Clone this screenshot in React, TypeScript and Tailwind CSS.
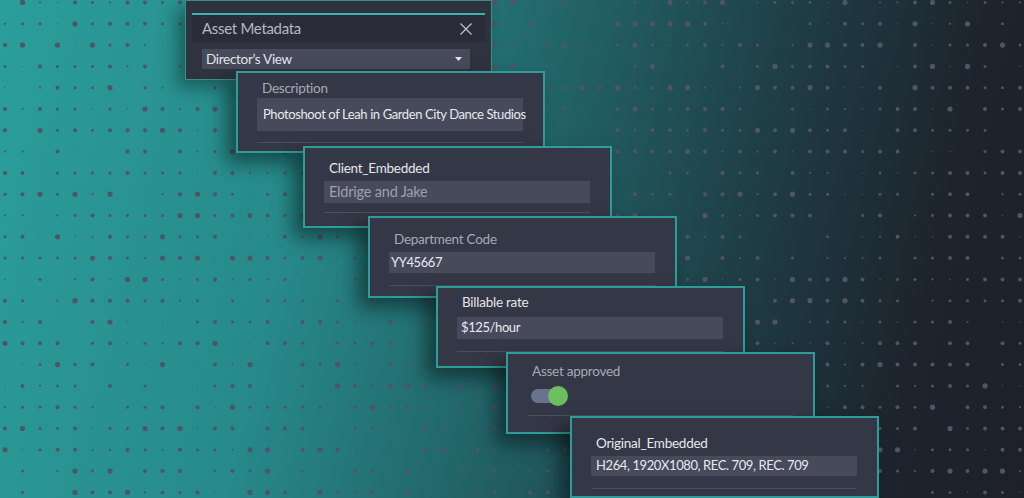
// deterministic dot field for the halftone background
function makeDots() {
  const dots: { x: number; y: number; r: number }[] = [];
  let seed = 7;
  const rand = () => {
    seed = (seed * 16807) % 2147483647;
    return seed / 2147483647;
  };
  const sizes = [0, 0.7, 1.1, 1.5, 1.5, 2, 2, 2.6];
  for (let row = 0; row < 24; row++) {
    for (let col = 0; col < 60; col++) {
      const r = sizes[Math.floor(rand() * sizes.length)];
      if (r === 0) continue;
      dots.push({ x: 5 + col * 17.5, y: 2.5 + row * 21.3, r });
    }
  }
  return dots;
}

const dots = makeDots();

type Card = {
  pos: string;
  pad: string;
  label: string;
  labelClass: string;
  value?: string;
  valueClass?: string;
  inputClass?: string;
  gap: string;
  divGap: string;
  toggle?: boolean;
};

const cards: Card[] = [
  {
    pos: "left-[236px] top-[71px]",
    pad: "pt-[6px]",
    label: "Description",
    labelClass: "text-[#a7aab6]",
    value: "Photoshoot of Leah in Garden City Dance Studios",
    valueClass: "text-[13px] tracking-[-0.4px] text-[#e8e9ee] pl-[6px]",
    inputClass: "h-[33px]",
    gap: "mt-[1px]",
    divGap: "mt-[11px]",
  },
  {
    pos: "left-[303px] top-[146px]",
    pad: "pt-[11px]",
    label: "Client_Embedded",
    labelClass: "text-[#e6e7ec]",
    value: "Eldrige and Jake",
    valueClass: "text-[14.5px] tracking-[-0.2px] text-[#9ea1ae] pl-[5px]",
    inputClass: "h-[22px]",
    gap: "mt-[4px]",
    divGap: "mt-[9px]",
  },
  {
    pos: "left-[368px] top-[216px]",
    pad: "pt-[12px]",
    label: "Department Code",
    labelClass: "text-[#a7aab6]",
    value: "YY45667",
    valueClass: "text-[13px] tracking-[-0.4px] text-[#e8e9ee] pl-[2px]",
    inputClass: "h-[21px]",
    gap: "mt-[4px]",
    divGap: "mt-[12px]",
  },
  {
    pos: "left-[436px] top-[286px]",
    pad: "pt-[5px]",
    label: "Billable rate",
    labelClass: "text-[#e6e7ec]",
    value: "$125/hour",
    valueClass: "text-[13px] tracking-[-0.4px] text-[#e8e9ee] pl-[4px]",
    inputClass: "h-[22px]",
    gap: "mt-[6px]",
    divGap: "mt-[12px]",
  },
  {
    pos: "left-[506px] top-[352px]",
    pad: "pt-[8px]",
    label: "Asset approved",
    labelClass: "text-[#a7aab6]",
    toggle: true,
    gap: "mt-[6px]",
    divGap: "mt-[9px]",
  },
  {
    pos: "left-[570px] top-[416px]",
    pad: "pt-[16px]",
    label: "Original_Embedded",
    labelClass: "text-[#e6e7ec]",
    value: "H264, 1920X1080, REC. 709, REC. 709",
    valueClass: "text-[13px] tracking-[-0.4px] text-[#e8e9ee] pl-[5px]",
    inputClass: "h-[20px]",
    gap: "mt-[4px]",
    divGap: "mt-[12px]",
  },
];

function FieldCard({ card }: { card: Card }) {
  return (
    <div
      className={`absolute ${card.pos} w-[309px] h-[82px] border-2 border-[#2e9d99] bg-[#343745] shadow-[-10px_10px_18px_rgba(0,0,0,0.45)] pl-[19px] pr-[20px] ${card.pad} flex flex-col`}
    >
      <div
        className={`pl-[5px] text-[13.5px] leading-[18px] tracking-[-0.25px] whitespace-nowrap ${card.labelClass}`}
      >
        {card.label}
      </div>
      {card.toggle ? (
        <div className={`${card.gap} h-[20px] flex items-center pl-[4px]`}>
          <div className="relative w-[35px] h-[14px] rounded-full bg-[#6b7290]">
            <div className="absolute right-[-2px] top-[-3px] w-[20px] h-[20px] rounded-full bg-[#6cbf5f]" />
          </div>
        </div>
      ) : (
        <div
          className={`${card.gap} ${card.inputClass} bg-[#464a5b] flex items-center whitespace-nowrap ${card.valueClass}`}
        >
          {card.value}
        </div>
      )}
      <div className={`${card.divGap} h-px bg-[#4b4f5f]`} />
    </div>
  );
}

export default function App() {
  return (
    <div className="relative w-[1024px] h-[498px] overflow-hidden font-['Lato','Noto_Sans',sans-serif] bg-[linear-gradient(103deg,#2b9e9a_0%,#27898a_30%,#215d62_54%,#1f3c44_71%,#1d242d_87%,#1d2029_100%)]">
      <svg className="absolute inset-0" width="1024" height="498">
        {dots.map((d, i) => (
          <circle key={i} cx={d.x} cy={d.y} r={d.r} fill="#4e5565" />
        ))}
      </svg>

      {/* metadata panel */}
      <div className="absolute left-[185px] top-0 w-[307px] h-[80px] bg-[#2f323f] border border-[#3a8f8d] shadow-[-8px_8px_16px_rgba(0,0,0,0.35)] flex flex-col">
        <div className="mx-[6px] mt-[12px] h-[2px] bg-[#3cb2ac]" />
        <div className="mx-[6px] h-[27px] bg-[#2a2d39] flex items-center justify-between pl-[10px] pr-[13px]">
          <span className="text-[15px] tracking-[-0.3px] text-[#b5b8c3]">Asset Metadata</span>
          <svg width="12" height="12" viewBox="0 0 12 12">
            <path d="M0.5 0.5 L11.5 11.5 M11.5 0.5 L0.5 11.5" stroke="#bfc2cb" strokeWidth="1.2" />
          </svg>
        </div>
        <div className="ml-[16px] mr-[21px] mt-[7px] h-[20px] bg-[#464a5b] flex items-center justify-between pl-[4px] pr-[8px]">
          <span className="text-[13.5px] tracking-[-0.3px] text-[#e4e5ea]">Director’s View</span>
          <svg width="7" height="4" viewBox="0 0 7 4">
            <path d="M0 0 L7 0 L3.5 4 Z" fill="#e4e5ea" />
          </svg>
        </div>
      </div>

      {cards.map((c) => (
        <FieldCard key={c.label} card={c} />
      ))}
    </div>
  );
}
